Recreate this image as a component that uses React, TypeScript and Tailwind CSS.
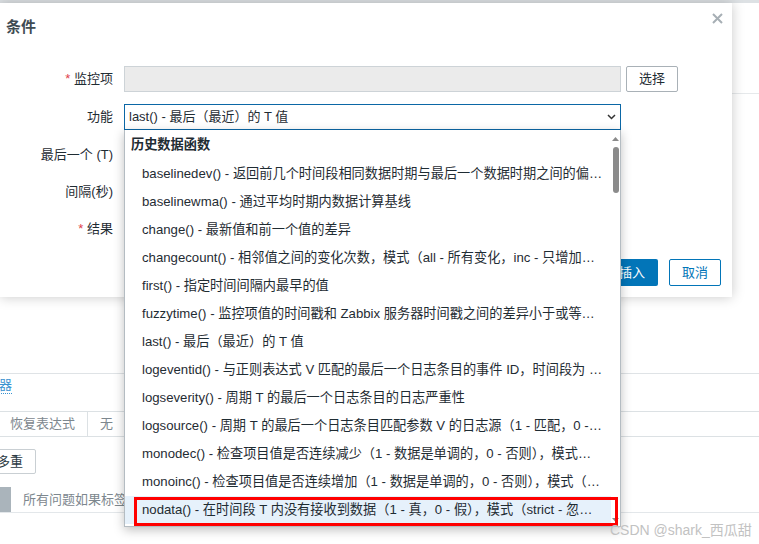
import React from "react";

const items = [
  "baselinedev() - 返回前几个时间段相同数据时期与最后一个数据时期之间的偏差数（标准差）",
  "baselinewma() - 通过平均时期内数据计算基线",
  "change() - 最新值和前一个值的差异",
  "changecount() - 相邻值之间的变化次数，模式（all - 所有变化，inc - 只增加，dec - 只减少）",
  "first() - 指定时间间隔内最早的值",
  "fuzzytime() - 监控项值的时间戳和 Zabbix 服务器时间戳之间的差异小于或等于 T 秒（1 - 真，0 - 假）",
  "last() - 最后（最近）的 T 值",
  "logeventid() - 与正则表达式 V 匹配的最后一个日志条目的事件 ID，时间段为 T（1 - 匹配，0 - 不匹配）",
  "logseverity() - 周期 T 的最后一个日志条目的日志严重性",
  "logsource() - 周期 T 的最后一个日志条目匹配参数 V 的日志源（1 - 匹配，0 - 不匹配）",
  "monodec() - 检查项目值是否连续减少（1 - 数据是单调的，0 - 否则），模式（strict - 严格单调）",
  "monoinc() - 检查项目值是否连续增加（1 - 数据是单调的，0 - 否则），模式（strict - 严格单调）",
  "nodata() - 在时间段 T 内没有接收到数据（1 - 真，0 - 假），模式（strict - 忽略代理时间）",
];

export default function App() {
  return (
    <div className="relative w-[759px] h-[544px] overflow-hidden bg-white font-['Liberation_Sans','Noto_Sans_CJK_SC',sans-serif] text-[13px] text-[#1f2c33]">
      {/* background page */}
      <div className="flex flex-col">
        <div className="h-[3px] bg-[#dde1e4]" />
        <div className="h-[91px] border-b border-[#e6e9eb]" />
        <div className="h-[280px] border-b border-[#dfe3e6]" />
        <div className="h-[37px] flex items-start pt-[3px]">
          <span className="ml-[-27px] leading-[16px] text-[#3a92d0] border-b border-dotted border-[#3a92d0]">
            触发器
          </span>
        </div>
        <div className="h-[26px] flex border-y border-[#dce1e4] text-[#7d878e]">
          <div className="w-[88px] border-r border-[#dce1e4] pl-[10px] flex items-center">恢复表达式</div>
          <div className="pl-[12px] flex items-center">无</div>
        </div>
        <div className="mt-[12px] h-[25px] flex">
          <div className="ml-[-16px] px-[12px] border border-[#c9cfd3] rounded-[2px] flex items-center text-[#2c3a43]">
            多重
          </div>
        </div>
        <div className="mt-[13px] h-[26px] flex border-b border-[#e3e7ea]">
          <div className="w-[11px] bg-[#aab4bb]" />
          <div className="pl-[12px] flex items-center text-[#7d878e]">所有问题如果标签值匹配</div>
        </div>
      </div>

      {/* dialog */}
      <div className="absolute left-0 top-[3px] w-[732px] h-[294px] bg-white shadow-[0_0_12px_rgba(0,0,0,0.22)] flex flex-col">
        <div className="flex justify-between items-start pt-[10px] pl-[6px] pr-[9px]">
          <div className="mt-[5px] text-[15px] leading-[18px] font-bold text-[#3f4b53]">条件</div>
          <svg width="11" height="11" viewBox="0 0 11 11">
            <path d="M1 1L10 10M10 1L1 10" stroke="#a7afb5" strokeWidth="2" />
          </svg>
        </div>

        <div className="mt-[30px] flex flex-col">
          <div className="flex items-center h-[26px]">
            <div className="w-[113px] text-right">
              <span className="text-[#e0414b]">*</span> 监控项
            </div>
            <div className="ml-[11px] w-[497px] h-[26px] bg-[#ebebeb] border border-[#cdd3d7]" />
            <div className="ml-[5px] w-[52px] h-[26px] border border-[#a9b1b7] rounded-[2px] bg-white flex items-center justify-center">
              选择
            </div>
          </div>
          <div className="mt-[12px] flex items-center h-[26px]">
            <div className="w-[113px] text-right">功能</div>
            <div className="ml-[11px] w-[497px] h-[26px] border border-[#0b67a6] bg-white flex items-center justify-between pl-[4px] pr-[4px]">
              <span>last() - 最后（最近）的 T 值</span>
              <svg width="9" height="6" viewBox="0 0 9 6">
                <path d="M1 1L4.5 4.5L8 1" stroke="#333" strokeWidth="1.5" fill="none" />
              </svg>
            </div>
          </div>
          <div className="mt-[12px] flex items-center h-[26px]">
            <div className="w-[113px] text-right">最后一个 (T)</div>
          </div>
          <div className="mt-[11px] flex items-center h-[26px]">
            <div className="w-[113px] text-right">间隔(秒)</div>
          </div>
          <div className="mt-[11px] flex items-center h-[26px]">
            <div className="w-[113px] text-right">
              <span className="text-[#e0414b]">*</span> 结果
            </div>
          </div>
        </div>

        <div className="mt-auto flex justify-end gap-[11px] pr-[11px] pb-[11px]">
          <div className="w-[52px] h-[27px] rounded-[2px] bg-[#0275b8] text-white flex items-center justify-center">插入</div>
          <div className="w-[52px] h-[27px] rounded-[2px] border border-[#0275b8] text-[#0275b8] bg-white flex items-center justify-center">
            取消
          </div>
        </div>
      </div>

      {/* dropdown */}
      <div className="absolute left-[124px] top-[130px] w-[497px] h-[397px] bg-white border border-t-0 border-[#b4bcc2] shadow-[0_3px_10px_rgba(0,0,0,0.25)] flex">
        <div className="flex-1 min-w-0 flex flex-col text-[13.2px]">
          <div className="h-[30px] flex items-center pl-[6px] font-bold">历史数据函数</div>
          {items.map((t, i) => (
            <div
              key={i}
              className={
                i === 12
                  ? "h-[28px] leading-[28px] truncate pl-[17px] pr-[7px] bg-[#e6f1fb]"
                  : "h-[28px] leading-[28px] truncate pl-[17px] pr-[7px]"
              }
            >
              {t}
            </div>
          ))}
        </div>
        <div className="w-[9px] flex flex-col items-center pt-[7px] pb-[4px]">
          <svg width="7" height="4" viewBox="0 0 7 4">
            <polygon points="3.5,0 7,4 0,4" fill="#8a8a8a" />
          </svg>
          <div className="mt-[6px] w-[6px] h-[46px] rounded-full bg-[#8b8b8b]" />
          <svg className="mt-auto" width="7" height="4" viewBox="0 0 7 4">
            <polygon points="0,0 7,0 3.5,4" fill="#8a8a8a" />
          </svg>
        </div>
        <div className="absolute left-[9px] top-[367px] w-[484px] h-[29px] border-[3px] border-[#ff0000]" />
      </div>

      <div className="absolute left-[610px] top-[522px] text-[14px] leading-[16px] text-[#c2c2c2]">CSDN @shark_西瓜甜</div>
    </div>
  );
}
